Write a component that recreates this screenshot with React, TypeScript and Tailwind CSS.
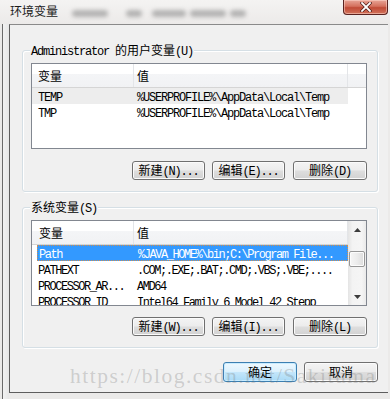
import React from "react";

const ASC = "font-['Liberation_Mono',monospace] text-[12px] tracking-[-1.2px] whitespace-pre";
const ASC2 = "font-['Liberation_Mono',monospace] text-[12px] tracking-[-1.45px] whitespace-pre";
const CJK = "font-['Noto_Sans_CJK_SC',sans-serif] text-[12px] whitespace-pre";

function T({ s, asc = ASC }: { s: string; asc?: string }) {
  const parts = s.split(/([\x00-\x7f]+)/).filter(Boolean);
  return (
    <>
      {parts.map((p, i) =>
        /^[\x00-\x7f]/.test(p) ? (
          <span key={i} className={asc}>
            {p}
          </span>
        ) : (
          <span key={i} className={CJK}>
            {p}
          </span>
        )
      )}
    </>
  );
}

function Btn({ label, w, primary = false, extra = "" }: { label: string; w: string; primary?: boolean; extra?: string }) {
  const base = primary
    ? "h-[20px] border-[#3c7fb1] bg-[linear-gradient(#eef8fe,#dcf1fd_48%,#c3e6fb_52%,#a9daf6)] shadow-[inset_0_0_0_1px_#c8ecff]"
    : "h-[19px] border-[#707070] bg-[linear-gradient(#f4f4f4,#ececec_48%,#dedede_52%,#d2d2d2)] shadow-[inset_0_0_0_1px_#fbfbfb]";
  return (
    <div className={`${w} ${base} ${extra} rounded-[3px] border flex items-center justify-center leading-[14px] text-black`}>
      <span className="flex items-baseline">
        <T s={label} />
      </span>
    </div>
  );
}

function Group({ legend, children, pb }: { legend: string; children: React.ReactNode; pb: string }) {
  return (
    <div className={`relative rounded-[3px] border border-[#d5dfe5] shadow-[inset_1px_1px_0_#ffffff,1px_1px_0_#ffffff] pl-[8px] pr-[10px] pt-[12px] ${pb}`}>
      <div className="absolute left-[7px] top-[-8px] px-[1px] bg-[#f0f0f0] leading-[14px] flex items-baseline text-black">
        <T s={legend} />
      </div>
      {children}
    </div>
  );
}

function Header({ full }: { full: boolean }) {
  return (
    <div className="h-[24px] flex shrink-0 border-b border-[#d5d5d5] bg-[linear-gradient(#ffffff,#ffffff_42%,#f4f5f7_42%,#f1f2f4)]">
      <div className={`w-[102px] ${full ? "pl-[6px]" : "pl-[7px]"} border-r border-[#e3e5e8] flex items-center leading-[14px]`}>
        <span className={CJK}>变量</span>
      </div>
      <div className="w-[214px] pl-[3px] border-r border-[#e3e5e8] flex items-center leading-[14px]">
        <span className={CJK}>值</span>
      </div>
      {full && <div className="flex-1" />}
    </div>
  );
}

function Arrow({ up }: { up: boolean }) {
  return (
    <svg width="7" height="4" viewBox="0 0 7 4">
      {up ? <polygon points="3.5,0 7,4 0,4" fill="#3c3c3c" /> : <polygon points="0,0 7,0 3.5,4" fill="#3c3c3c" />}
    </svg>
  );
}

const sysRows = [
  ["Path", "%JAVA_HOME%\\bin;C:\\Program File..."],
  ["PATHEXT", ".COM;.EXE;.BAT;.CMD;.VBS;.VBE;...."],
  ["PROCESSOR_AR...", "AMD64"],
  ["PROCESSOR_ID", "Intel64 Family 6 Model 42 Stepp"],
];

export default function App() {
  return (
    <div className="w-[390px] h-[399px] overflow-hidden relative flex flex-col bg-[#ebeae9]">
      {/* title bar */}
      <div className="h-[24px] shrink-0 flex items-start bg-[linear-gradient(#f4f3f2,#eceae9)]">
        <span className="ml-[10px] mt-[3px] font-['Noto_Sans_CJK_SC',sans-serif] text-[12px] leading-[16px] text-[#1a1a1a]">
          环境变量
        </span>
        <div className="ml-[14px] mt-[10px] w-[36px] h-[7px] rounded-full bg-[#8c8c8c] opacity-60 blur-[2px]" />
        <div className="ml-[18px] mt-[10px] w-[16px] h-[7px] rounded-full bg-[#8c8c8c] opacity-60 blur-[2px]" />
        <div className="ml-[10px] mt-[10px] w-[34px] h-[7px] rounded-full bg-[#8c8c8c] opacity-60 blur-[2px]" />
        <div className="ml-[4px] mt-[10px] w-[36px] h-[7px] rounded-full bg-[#8c8c8c] opacity-60 blur-[2px]" />
        <div className="ml-[4px] mt-[10px] w-[16px] h-[7px] rounded-full bg-[#8c8c8c] opacity-60 blur-[2px]" />
        <div className="ml-auto mr-[2px] w-[45px] h-[15px] rounded-b-[4px] border border-t-0 border-[#5a2320] bg-[linear-gradient(#e8a597,#d4705d_45%,#c04a36_55%,#d2745c)] flex items-center justify-center shadow-[inset_0_0_0_1px_rgba(255,220,210,0.5)]">
          <svg width="12" height="10" viewBox="0 0 12 10">
            <path d="M2 1 L10 9 M10 1 L2 9" stroke="#4a1a16" strokeWidth="3.2" strokeLinecap="square" />
            <path d="M2 1 L10 9 M10 1 L2 9" stroke="#ffffff" strokeWidth="1.8" strokeLinecap="square" />
          </svg>
        </div>
      </div>

      {/* body */}
      <div className="flex-1 flex">
        <div className="w-[9px] pl-[2px] flex">
          <div className="w-full border-l border-[#6a6a6a] bg-[linear-gradient(90deg,#f2f2f2,#e6e6e6)]" />
        </div>
        <div className="w-[379px] mb-[6px] border-l border-t border-b border-l-[#5e5e5e] border-t-[#8a8a8a] border-b-[#5e5e5e] bg-[#f0f0f0] pl-[12px] pr-[10px] pt-[25px] flex flex-col">
          {/* user variables */}
          <Group legend="Administrator 的用户变量(U)" pb="pb-[11px]">
            <div className="h-[86px] border border-[#828790] bg-white overflow-hidden flex flex-col">
              <Header full={true} />
              <div className="h-[16px] w-[316px] bg-[#ededed] flex items-center leading-[14px] text-black">
                <div className="w-[102px] pl-[6px]">
                  <span className={ASC}>TEMP</span>
                </div>
                <div className="pl-[3px]">
                  <span className={ASC}>%USERPROFILE%\AppData\Local\Temp</span>
                </div>
              </div>
              <div className="h-[16px] w-[316px] flex items-center leading-[14px] text-black">
                <div className="w-[102px] pl-[6px]">
                  <span className={ASC}>TMP</span>
                </div>
                <div className="pl-[3px]">
                  <span className={ASC}>%USERPROFILE%\AppData\Local\Temp</span>
                </div>
              </div>
            </div>
            <div className="mt-[12px] flex justify-end">
              <Btn label="新建(N)..." w="w-[73px]" />
              <Btn label="编辑(E)..." w="w-[73px]" extra="ml-[7px]" />
              <Btn label="删除(D)" w="w-[74px]" extra="ml-[8px]" />
            </div>
          </Group>

          {/* system variables */}
          <div className="mt-[15px]">
            <Group legend="系统变量(S)" pb="pb-[11px]">
              <div className="h-[86px] border border-[#828790] bg-white overflow-hidden flex">
                <div className="w-[316px] flex flex-col">
                  <Header full={false} />
                  {sysRows.map(([k, v], i) => (
                    <div
                      key={k}
                      className={
                        i === 0
                          ? "h-[16px] shrink-0 ml-[5px] bg-[#3399ff] border border-dotted border-[#d08f4f] text-white flex items-center leading-[14px]"
                          : "h-[16px] shrink-0 ml-[5px] text-black flex items-center leading-[14px]"
                      }
                    >
                      <div className="w-[97px] pl-[1px] shrink-0">
                        <span className={ASC2}>{k}</span>
                      </div>
                      <div className="pl-[3px] whitespace-nowrap">
                        <span className={ASC2}>{v}</span>
                      </div>
                    </div>
                  ))}
                </div>
                <div className="w-[18px] flex flex-col bg-[linear-gradient(90deg,#e4e4e4,#f3f3f3_25%,#f5f5f5_75%,#eaeaea)]">
                  <div className="h-[17px] shrink-0 flex items-center justify-center">
                    <Arrow up={true} />
                  </div>
                  <div className="flex-1 pt-[13px] pl-[1px] pr-[1px]">
                    <div className="h-[16px] rounded-[2px] border border-[#979797] bg-[linear-gradient(90deg,#f6f6f6,#ececec_50%,#dcdcdc)] shadow-[inset_0_0_0_1px_#fcfcfc]" />
                  </div>
                  <div className="h-[17px] shrink-0 flex items-center justify-center">
                    <Arrow up={false} />
                  </div>
                </div>
              </div>
              <div className="mt-[11px] flex justify-end">
                <Btn label="新建(W)..." w="w-[73px]" />
                <Btn label="编辑(I)..." w="w-[73px]" extra="ml-[7px]" />
                <Btn label="删除(L)" w="w-[74px]" extra="ml-[8px]" />
              </div>
            </Group>
          </div>

          {/* OK / Cancel */}
          <div className="mt-[14px] flex justify-end">
            <Btn label="确定" w="w-[74px]" primary={true} />
            <Btn label="取消" w="w-[74px]" extra="ml-[7px] h-[20px]" />
          </div>
        </div>
      </div>

      {/* watermark */}
      <div className="absolute left-[70px] top-[366px] font-['Liberation_Serif',serif] text-[21.5px] leading-none tracking-[1.5px] text-[rgba(120,120,120,0.3)] whitespace-nowrap pointer-events-none">
        https://blog.csdn.net/Sakituma
      </div>
    </div>
  );
}
